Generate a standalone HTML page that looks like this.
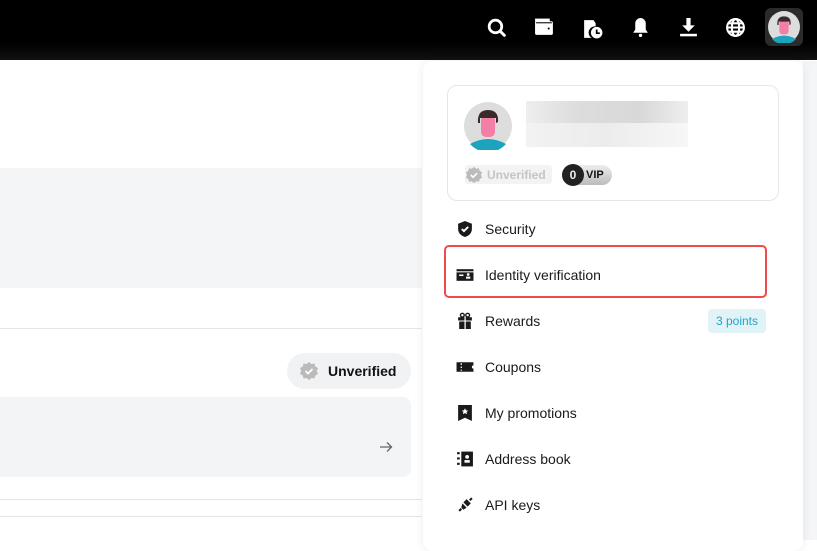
<!DOCTYPE html>
<html><head><meta charset="utf-8"><style>
*{box-sizing:border-box;margin:0;padding:0}
body{width:817px;height:540px;overflow:hidden;background:#fff;font-family:"Liberation Sans",sans-serif;position:relative}
.hdr{position:absolute;left:0;top:0;width:817px;height:60px;background:linear-gradient(#000 70%,#111)}
.ic{position:absolute;top:17px}
.abs{position:absolute}
.menu .it{position:absolute;left:456px;height:20px;font-size:14px;color:#1a1a1a;display:flex;align-items:center}
.menu .it svg{width:18px;height:18px;margin-right:11px}
</style></head><body>
<div class="hdr">
<svg class="ic" style="left:486px" width="21" height="21" viewBox="0 0 20 20"><circle cx="9" cy="9" r="6" stroke="#fff" stroke-width="2.6" fill="none"/><path d="M13.5 13.5L17.5 17.5" stroke="#fff" stroke-width="2.8" stroke-linecap="round"/></svg>
<svg class="ic" style="left:534px" width="21" height="21" viewBox="0 0 20 20"><rect x="1" y="4" width="17" height="13" rx="1.5" fill="#fff"/><rect x="1" y="1.5" width="14" height="3" fill="#fff"/><rect x="2" y="5" width="15" height="1" fill="#000"/><circle cx="14" cy="11" r="1" fill="#000"/></svg>
<svg class="ic" style="left:582px" width="21" height="23" viewBox="0 0 20 22"><path d="M2 3h9l2 3v3a6 6 0 0 0-4 11H2z" fill="#fff"/><circle cx="14" cy="15" r="5.5" fill="#fff"/><path d="M14 12v3.5h3" stroke="#000" stroke-width="1.6" fill="none"/></svg>
<svg class="ic" style="left:630px" width="21" height="21" viewBox="0 0 20 20"><path d="M10 1a5 5 0 0 0-5 5v6l-2 3h14l-2-3V6a5 5 0 0 0-5-5z" fill="#fff"/><circle cx="10" cy="17.5" r="1.6" fill="#fff"/></svg>
<svg class="ic" style="left:678px" width="21" height="21" viewBox="0 0 20 20"><path d="M8 1h4v7h4l-6 6-6-6h4z" fill="#fff"/><rect x="2" y="16" width="16" height="2.4" fill="#fff"/></svg>
<svg class="ic" style="left:725px" width="21" height="21" viewBox="0 0 20 20" fill="none" stroke="#fff" stroke-width="2"><circle cx="10" cy="10" r="8"/><ellipse cx="10" cy="10" rx="3.5" ry="8"/><path d="M2 10h16M3.5 6h13M3.5 14h13"/></svg>
<div class="abs" style="left:765px;top:8px;width:38px;height:38px;background:#2b2b2b;border-radius:6px"></div>
<svg class="abs" style="left:768px;top:11px" width="32" height="32" viewBox="0 0 48 48"><circle cx="24" cy="24" r="24" fill="#ddd"/><path d="M6 42q18-10 36 0a24 24 0 0 1-36 0z" fill="#1ea3bf"/><rect x="17" y="13" width="14" height="22" rx="5" fill="#f47fa6"/><path d="M14 21q-1-13 10-13t10 12l-2 1v-5h-16v5z" fill="#3a2a2a"/></svg>
</div>
<div class="abs" style="left:0;top:168px;width:422px;height:120px;background:#f4f5f7"></div>
<div class="abs" style="left:0;top:328px;width:422px;height:1px;background:#e6e6e6"></div>
<div class="abs" style="left:287px;top:353px;width:124px;height:36px;border-radius:18px;background:#f1f2f4;font-size:14px;font-weight:bold;color:#111;display:flex;align-items:center;padding-left:12px">
<svg width="20" height="20" viewBox="0 0 20 20" style="margin-right:9px"><path d="M10 1l2.5 2 3-.5.8 3 2.7 1.5-1.2 3 1.2 3-2.7 1.5-.8 3-3-.5L10 19l-2.5-2-3 .5-.8-3L1 13l1.2-3L1 7l2.7-1.5.8-3 3 .5z" fill="#bbb"/><path d="M6.5 10l2.5 2.5 4.5-4.5" stroke="#fff" stroke-width="1.8" fill="none"/></svg>Unverified</div>
<div class="abs" style="left:-10px;top:397px;width:421px;height:80px;background:#f3f4f6;border-radius:8px"></div>
<svg class="abs" style="left:379px;top:441px" width="14" height="12" viewBox="0 0 14 12"><path d="M1 6h12M8 1.5L12.5 6 8 10.5" stroke="#666" stroke-width="1.3" fill="none"/></svg>
<div class="abs" style="left:0;top:499px;width:422px;height:1px;background:#e6e6e6"></div>
<div class="abs" style="left:0;top:516px;width:422px;height:1px;background:#e6e6e6"></div>
<div class="abs" style="left:803px;top:61px;width:14px;height:479px;background:#f4f5f7"></div>
<div class="abs" style="left:423px;top:61px;width:380px;height:490px;background:#fff;border-radius:10px;box-shadow:0 0 10px rgba(0,0,0,0.08)"></div>
<div class="abs" style="left:447px;top:85px;width:332px;height:116px;border:1px solid #e6e6e6;border-radius:10px"></div>
<svg class="abs" style="left:464px;top:102px" width="48" height="48" viewBox="0 0 48 48"><circle cx="24" cy="24" r="24" fill="#ddd"/><path d="M6 42q18-10 36 0a24 24 0 0 1-36 0z" fill="#1ea3bf"/><rect x="17" y="13" width="14" height="22" rx="5" fill="#f47fa6"/><path d="M14 21q-1-13 10-13t10 12l-2 1v-5h-16v5z" fill="#3a2a2a"/></svg>
<div class="abs" style="left:526px;top:101px;width:162px;height:22px;background:linear-gradient(90deg,#eee,#ddd 30%,#d8d8d8 70%,#eee)"></div>
<div class="abs" style="left:526px;top:123px;width:162px;height:24px;background:linear-gradient(90deg,#f2f2f2,#ececec 50%,#f7f7f7)"></div>
<div class="abs" style="left:465px;top:165px;width:87px;height:19px;background:#f3f3f3;border-radius:3px;font-size:12px;font-weight:bold;color:#c4c4c4;display:flex;align-items:center">
<svg width="18" height="18" viewBox="0 0 20 20" style="margin-right:4px"><path d="M10 1l2.5 2 3-.5.8 3 2.7 1.5-1.2 3 1.2 3-2.7 1.5-.8 3-3-.5L10 19l-2.5-2-3 .5-.8-3L1 13l1.2-3L1 7l2.7-1.5.8-3 3 .5z" fill="#bbb"/><path d="M6.5 10l2.5 2.5 4.5-4.5" stroke="#fff" stroke-width="1.8" fill="none"/></svg>Unverified</div>
<div class="abs" style="left:562px;top:165px;width:50px;height:20px;background:linear-gradient(#eee,#bbb);border-radius:10px;font-size:11px;font-weight:bold;color:#111;padding-left:24px;line-height:20px">VIP</div>
<div class="abs" style="left:562px;top:164px;width:22px;height:22px;border-radius:50%;background:#222;color:#eee;font-size:12px;font-weight:bold;text-align:center;line-height:22px">0</div>
<div class="abs" style="left:444px;top:245px;width:323px;height:53px;border:2.5px solid #ef4b4b;border-radius:5px"></div>
<div class="abs" style="left:708px;top:309px;width:58px;height:24px;background:#e1f3f7;border-radius:4px;color:#19a8c8;font-size:12px;text-align:center;line-height:24px">3 points</div>
<div class="menu">
<div class="it" style="top:219px"><svg viewBox="0 0 17 17"><path d="M8.5 1L15 3.5v5c0 4-3 6.5-6.5 7.5C5 15 2 12.5 2 8.5v-5z" fill="#1a1a1a"/><path d="M5.5 8.5l2 2 4-4" stroke="#fff" stroke-width="1.8" fill="none"/></svg>Security</div>
<div class="it" style="top:265px"><svg viewBox="0 0 17 17"><rect x="0.5" y="3" width="16" height="11" fill="#1a1a1a"/><rect x="0.5" y="5" width="16" height="1" fill="#fff"/><rect x="3" y="8" width="4" height="1.5" fill="#fff"/><circle cx="11.5" cy="8" r="1.3" fill="#fff"/><rect x="9.5" y="10" width="4" height="2" fill="#fff"/></svg>Identity verification</div>
<div class="it" style="top:311px"><svg viewBox="0 0 17 17"><path d="M2 5h13v3H2zM3 9h11v7H3z" fill="#1a1a1a"/><rect x="8" y="5" width="1.2" height="11" fill="#fff"/><circle cx="6" cy="3" r="1.8" stroke="#1a1a1a" stroke-width="1.3" fill="none"/><circle cx="11" cy="3" r="1.8" stroke="#1a1a1a" stroke-width="1.3" fill="none"/></svg>Rewards</div>
<div class="it" style="top:357px"><svg viewBox="0 0 17 17"><path d="M0.5 4h16v3a1.5 1.5 0 0 0 0 3v3H0.5z" fill="#1a1a1a"/><path d="M5 5v1.5M5 8v1.5M5 11v1" stroke="#fff" stroke-width="1.2"/></svg>Coupons</div>
<div class="it" style="top:403px"><svg viewBox="0 0 17 17"><path d="M2 1h13v15l-6.5-3L2 16z" fill="#1a1a1a"/><path d="M8.5 4l1 2 2 .2-1.5 1.4.5 2-2-1-2 1 .5-2L5.5 6.2l2-.2z" fill="#fff"/></svg>My promotions</div>
<div class="it" style="top:449px"><svg viewBox="0 0 17 17"><rect x="5" y="1.5" width="11" height="14" fill="#1a1a1a"/><path d="M1 3h2.5M1 8h2.5M1 13h2.5" stroke="#1a1a1a" stroke-width="2"/><circle cx="10.5" cy="6.5" r="1.8" fill="#fff"/><rect x="8" y="9.5" width="5" height="2.5" fill="#fff"/></svg>Address book</div>
<div class="it" style="top:495px"><svg viewBox="0 0 17 17"><path d="M10 3l4 4-3 3-4-4z" fill="#1a1a1a"/><path d="M6 7l4 4-3 2-2-2z" fill="#1a1a1a"/><path d="M3 14l2-2M13 4l2-2" stroke="#1a1a1a" stroke-width="2"/></svg>API keys</div>
</div>
</body></html>
